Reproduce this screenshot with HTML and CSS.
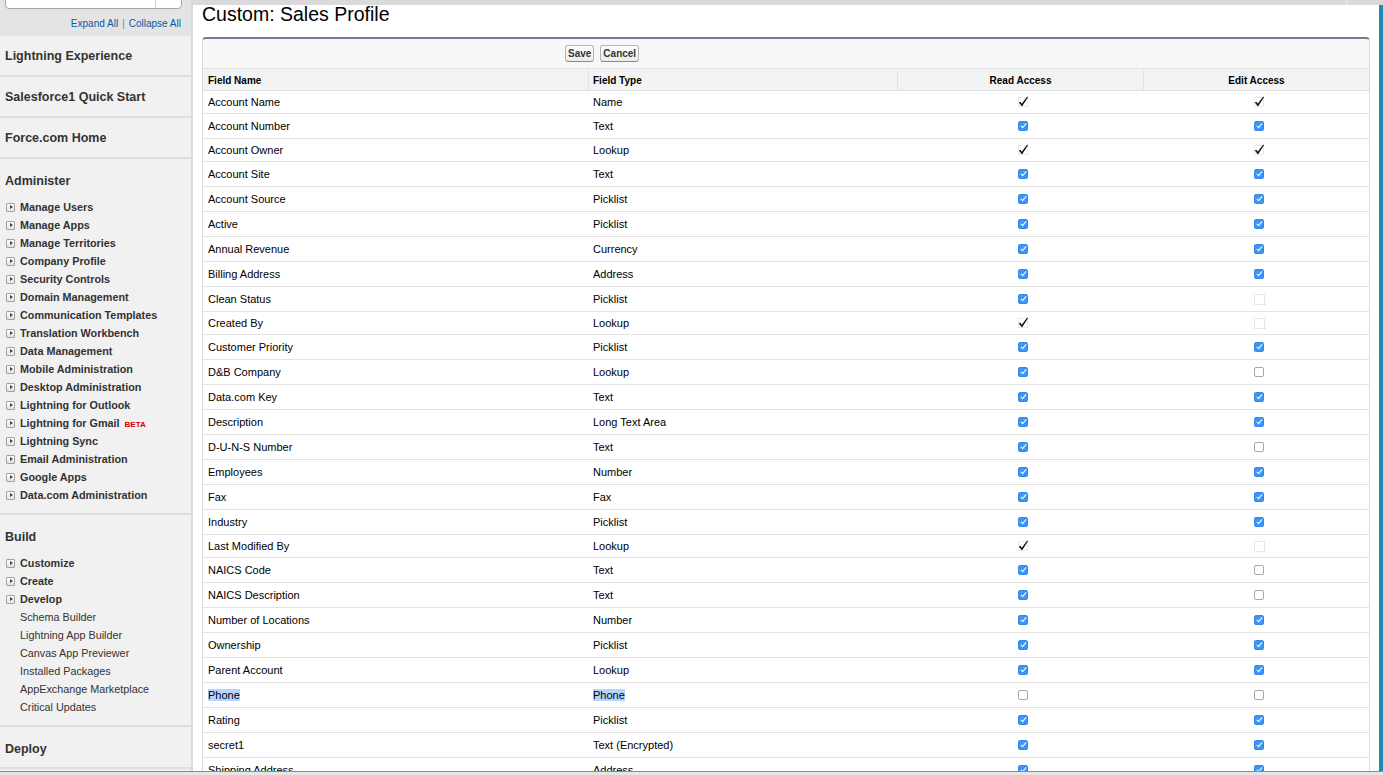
FILE: index.html
```html
<!DOCTYPE html>
<html lang="en">
<head>
<meta charset="utf-8">
<title>Custom: Sales Profile</title>
<link rel="stylesheet" href="styles.css">
</head>
<body>
<div class="app">
  <div class="frame">
    <aside class="sidebar">
      <div class="sb-top">
        <div class="search"><span class="search-btn"></span></div>
        <div class="expand"><a href="#">Expand All</a><span class="sep">|</span><a href="#">Collapse All</a></div>
      </div>
      <div class="sb-link">Lightning Experience</div>
      <div class="sb-link">Salesforce1 Quick Start</div>
      <div class="sb-link">Force.com Home</div>
      <div class="sb-sec">
        <div class="sb-head">Administer</div>
        <ul class="sb-list">
          <li><span class="tw"></span><span>Manage Users</span></li>
          <li><span class="tw"></span><span>Manage Apps</span></li>
          <li><span class="tw"></span><span>Manage Territories</span></li>
          <li><span class="tw"></span><span>Company Profile</span></li>
          <li><span class="tw"></span><span>Security Controls</span></li>
          <li><span class="tw"></span><span>Domain Management</span></li>
          <li><span class="tw"></span><span>Communication Templates</span></li>
          <li><span class="tw"></span><span>Translation Workbench</span></li>
          <li><span class="tw"></span><span>Data Management</span></li>
          <li><span class="tw"></span><span>Mobile Administration</span></li>
          <li><span class="tw"></span><span>Desktop Administration</span></li>
          <li><span class="tw"></span><span>Lightning for Outlook</span></li>
          <li><span class="tw"></span><span>Lightning for Gmail<b class="beta">BETA</b></span></li>
          <li><span class="tw"></span><span>Lightning Sync</span></li>
          <li><span class="tw"></span><span>Email Administration</span></li>
          <li><span class="tw"></span><span>Google Apps</span></li>
          <li><span class="tw"></span><span>Data.com Administration</span></li>
        </ul>
      </div>
      <div class="sb-sec">
        <div class="sb-head">Build</div>
        <ul class="sb-list">
          <li><span class="tw"></span><span>Customize</span></li>
          <li><span class="tw"></span><span>Create</span></li>
          <li><span class="tw"></span><span>Develop</span></li>
          <li class="plain">Schema Builder</li>
          <li class="plain">Lightning App Builder</li>
          <li class="plain">Canvas App Previewer</li>
          <li class="plain">Installed Packages</li>
          <li class="plain">AppExchange Marketplace</li>
          <li class="plain">Critical Updates</li>
        </ul>
      </div>
      <div class="sb-sec">
        <div class="sb-head">Deploy</div>
      </div>
    </aside>

    <div class="workspace">
      <div class="topstrip"><span class="ts-a"></span><span class="ts-b"></span></div>
      <div class="work-row">
        <main class="main">
          <h1>Custom: Sales Profile</h1>
          <section class="panel">
            <div class="btn-row"><button type="button">Save</button><button type="button">Cancel</button></div>
            <div class="grid">
              <div class="row head"><div class="c-name">Field Name</div><div class="c-type">Field Type</div><div class="c-acc">Read Access</div><div class="c-acc">Edit Access</div></div>

              <div class="row ro"><div class="c-name">Account Name</div><div class="c-type">Name</div><div class="c-acc"><svg class="ck" viewBox="0 0 12 12"><rect x="1.5" y="1.5" width="9" height="9" fill="none" stroke="#d6d6d6" stroke-dasharray="1 1"/><path d="M1.8 6.6 L3.4 5.7 L4.8 7.8 L10.2 0.6 L11 1.2 L5 10.6 Z" fill="#111"/></svg></div><div class="c-acc"><svg class="ck" viewBox="0 0 12 12"><rect x="1.5" y="1.5" width="9" height="9" fill="none" stroke="#d6d6d6" stroke-dasharray="1 1"/><path d="M1.8 6.6 L3.4 5.7 L4.8 7.8 L10.2 0.6 L11 1.2 L5 10.6 Z" fill="#111"/></svg></div></div>
              <div class="row"><div class="c-name">Account Number</div><div class="c-type">Text</div><div class="c-acc"><span class="cb on"></span></div><div class="c-acc"><span class="cb on"></span></div></div>
              <div class="row ro"><div class="c-name">Account Owner</div><div class="c-type">Lookup</div><div class="c-acc"><svg class="ck" viewBox="0 0 12 12"><rect x="1.5" y="1.5" width="9" height="9" fill="none" stroke="#d6d6d6" stroke-dasharray="1 1"/><path d="M1.8 6.6 L3.4 5.7 L4.8 7.8 L10.2 0.6 L11 1.2 L5 10.6 Z" fill="#111"/></svg></div><div class="c-acc"><svg class="ck" viewBox="0 0 12 12"><rect x="1.5" y="1.5" width="9" height="9" fill="none" stroke="#d6d6d6" stroke-dasharray="1 1"/><path d="M1.8 6.6 L3.4 5.7 L4.8 7.8 L10.2 0.6 L11 1.2 L5 10.6 Z" fill="#111"/></svg></div></div>
              <div class="row"><div class="c-name">Account Site</div><div class="c-type">Text</div><div class="c-acc"><span class="cb on"></span></div><div class="c-acc"><span class="cb on"></span></div></div>
              <div class="row"><div class="c-name">Account Source</div><div class="c-type">Picklist</div><div class="c-acc"><span class="cb on"></span></div><div class="c-acc"><span class="cb on"></span></div></div>
              <div class="row"><div class="c-name">Active</div><div class="c-type">Picklist</div><div class="c-acc"><span class="cb on"></span></div><div class="c-acc"><span class="cb on"></span></div></div>
              <div class="row"><div class="c-name">Annual Revenue</div><div class="c-type">Currency</div><div class="c-acc"><span class="cb on"></span></div><div class="c-acc"><span class="cb on"></span></div></div>
              <div class="row"><div class="c-name">Billing Address</div><div class="c-type">Address</div><div class="c-acc"><span class="cb on"></span></div><div class="c-acc"><span class="cb on"></span></div></div>
              <div class="row"><div class="c-name">Clean Status</div><div class="c-type">Picklist</div><div class="c-acc"><span class="cb on"></span></div><div class="c-acc"><span class="ck-off"></span></div></div>
              <div class="row ro"><div class="c-name">Created By</div><div class="c-type">Lookup</div><div class="c-acc"><svg class="ck" viewBox="0 0 12 12"><rect x="1.5" y="1.5" width="9" height="9" fill="none" stroke="#d6d6d6" stroke-dasharray="1 1"/><path d="M1.8 6.6 L3.4 5.7 L4.8 7.8 L10.2 0.6 L11 1.2 L5 10.6 Z" fill="#111"/></svg></div><div class="c-acc"><span class="ck-off"></span></div></div>
              <div class="row"><div class="c-name">Customer Priority</div><div class="c-type">Picklist</div><div class="c-acc"><span class="cb on"></span></div><div class="c-acc"><span class="cb on"></span></div></div>
              <div class="row"><div class="c-name">D&amp;B Company</div><div class="c-type">Lookup</div><div class="c-acc"><span class="cb on"></span></div><div class="c-acc"><span class="cb off"></span></div></div>
              <div class="row"><div class="c-name">Data.com Key</div><div class="c-type">Text</div><div class="c-acc"><span class="cb on"></span></div><div class="c-acc"><span class="cb on"></span></div></div>
              <div class="row"><div class="c-name">Description</div><div class="c-type">Long Text Area</div><div class="c-acc"><span class="cb on"></span></div><div class="c-acc"><span class="cb on"></span></div></div>
              <div class="row"><div class="c-name">D-U-N-S Number</div><div class="c-type">Text</div><div class="c-acc"><span class="cb on"></span></div><div class="c-acc"><span class="cb off"></span></div></div>
              <div class="row"><div class="c-name">Employees</div><div class="c-type">Number</div><div class="c-acc"><span class="cb on"></span></div><div class="c-acc"><span class="cb on"></span></div></div>
              <div class="row"><div class="c-name">Fax</div><div class="c-type">Fax</div><div class="c-acc"><span class="cb on"></span></div><div class="c-acc"><span class="cb on"></span></div></div>
              <div class="row"><div class="c-name">Industry</div><div class="c-type">Picklist</div><div class="c-acc"><span class="cb on"></span></div><div class="c-acc"><span class="cb on"></span></div></div>
              <div class="row ro"><div class="c-name">Last Modified By</div><div class="c-type">Lookup</div><div class="c-acc"><svg class="ck" viewBox="0 0 12 12"><rect x="1.5" y="1.5" width="9" height="9" fill="none" stroke="#d6d6d6" stroke-dasharray="1 1"/><path d="M1.8 6.6 L3.4 5.7 L4.8 7.8 L10.2 0.6 L11 1.2 L5 10.6 Z" fill="#111"/></svg></div><div class="c-acc"><span class="ck-off"></span></div></div>
              <div class="row"><div class="c-name">NAICS Code</div><div class="c-type">Text</div><div class="c-acc"><span class="cb on"></span></div><div class="c-acc"><span class="cb off"></span></div></div>
              <div class="row"><div class="c-name">NAICS Description</div><div class="c-type">Text</div><div class="c-acc"><span class="cb on"></span></div><div class="c-acc"><span class="cb off"></span></div></div>
              <div class="row"><div class="c-name">Number of Locations</div><div class="c-type">Number</div><div class="c-acc"><span class="cb on"></span></div><div class="c-acc"><span class="cb on"></span></div></div>
              <div class="row"><div class="c-name">Ownership</div><div class="c-type">Picklist</div><div class="c-acc"><span class="cb on"></span></div><div class="c-acc"><span class="cb on"></span></div></div>
              <div class="row"><div class="c-name">Parent Account</div><div class="c-type">Lookup</div><div class="c-acc"><span class="cb on"></span></div><div class="c-acc"><span class="cb on"></span></div></div>
              <div class="row"><div class="c-name"><span class="sel">Phone</span></div><div class="c-type"><span class="sel">Phone</span></div><div class="c-acc"><span class="cb off"></span></div><div class="c-acc"><span class="cb off"></span></div></div>
              <div class="row"><div class="c-name">Rating</div><div class="c-type">Picklist</div><div class="c-acc"><span class="cb on"></span></div><div class="c-acc"><span class="cb on"></span></div></div>
              <div class="row"><div class="c-name">secret1</div><div class="c-type">Text (Encrypted)</div><div class="c-acc"><span class="cb on"></span></div><div class="c-acc"><span class="cb on"></span></div></div>
              <div class="row"><div class="c-name">Shipping Address</div><div class="c-type">Address</div><div class="c-acc"><span class="cb on"></span></div><div class="c-acc"><span class="cb on"></span></div></div>
            </div>
          </section>
        </main>
        <div class="edgebar"></div>
      </div>
    </div>
  </div>
  <div class="bottombar"></div>
</div>
</body>
</html>
```

FILE: styles.css
```css
html, body {
  margin: 0;
  padding: 0;
  height: 775px;
  overflow: hidden;
}
body {
  font-family: "Liberation Sans", Arial, sans-serif;
  background: #fff;
  color: #000;
}
.app {
  display: flex;
  flex-direction: column;
  height: 775px;
}
.frame {
  display: flex;
  flex: 1;
  min-height: 0;
}

/* ---------- sidebar ---------- */
.sidebar {
  width: 191px;
  flex: none;
  background: #f1f1f1;
  border-right: 2px solid #dadada;
  color: #333;
  overflow: hidden;
}
.sb-top {
  height: 36px;
  background: #e4e4e4;
  overflow: hidden;
}
.search {
  height: 14px;
  margin: -5px 9px 0 5px;
  box-sizing: border-box;
  background: #fff;
  border: 1px solid #a5a5a5;
  border-radius: 0 0 4px 4px;
  display: flex;
  justify-content: flex-end;
}
.search-btn {
  width: 25px;
  border-left: 1px solid #cfcfcf;
}
.expand {
  margin-top: 9px;
  padding-right: 10px;
  text-align: right;
  font-size: 10px;
  line-height: 12px;
}
.expand a {
  color: #015ba7;
  text-decoration: none;
}
.expand .sep {
  color: #a56aa8;
  margin: 0 4px;
}
.sb-link {
  height: 41px;
  box-sizing: border-box;
  display: flex;
  align-items: center;
  padding-left: 5px;
  font-size: 12.5px;
  font-weight: bold;
  border-bottom: 2px solid #dedede;
}
.sb-sec {
  padding: 14px 0 9px 0;
  border-bottom: 2px solid #dedede;
}
.sb-head {
  padding-left: 5px;
  font-size: 12.5px;
  font-weight: bold;
  line-height: 17px;
}
.sb-list {
  list-style: none;
  margin: 8px 0 0 0;
  padding: 0;
}
.sb-list li {
  height: 18px;
  display: flex;
  align-items: center;
  gap: 5px;
  padding-left: 6px;
  font-size: 10.8px;
  font-weight: bold;
  white-space: nowrap;
}
.sb-list li.plain {
  padding-left: 20px;
  font-weight: normal;
}
.tw {
  width: 9px;
  height: 9px;
  box-sizing: border-box;
  border: 1px solid #a2a2a2;
  border-radius: 1px;
  background: linear-gradient(#ffffff, #e2e2e2);
  display: inline-flex;
  align-items: center;
  justify-content: center;
  flex: none;
}
.tw::after {
  content: "";
  width: 0;
  height: 0;
  border-left: 3px solid #444;
  border-top: 2.5px solid transparent;
  border-bottom: 2.5px solid transparent;
  margin-left: 1px;
}
.beta {
  color: #cc0000;
  font-size: 8px;
  font-weight: bold;
  margin-left: 5px;
}

/* ---------- workspace ---------- */
.workspace {
  flex: 1;
  min-width: 0;
  display: flex;
  flex-direction: column;
  overflow: hidden;
}
.topstrip {
  height: 5px;
  flex: none;
  display: flex;
  background: #dadada;
}
.ts-a {
  flex: 1;
  border-right: 1px solid #ebebeb;
}
.ts-b {
  width: 36px;
}
.work-row {
  flex: 1;
  min-height: 0;
  display: flex;
}
.main {
  flex: 1;
  min-width: 0;
  padding: 0 9px;
}
.edgebar {
  width: 4px;
  flex: none;
  background: #1a8cb3;
}
h1 {
  position: relative;
  margin: -2px 0 11px 0;
  font-size: 19.5px;
  line-height: 23px;
  font-weight: normal;
  color: #000;
}

/* ---------- panel ---------- */
.panel {
  border: 1px solid #dcdcdc;
  border-top: 2px solid #737b95;
  border-radius: 4px 4px 0 0;
  background: #f8f8f8;
}
.btn-row {
  height: 30px;
  box-sizing: border-box;
  border-bottom: 1px solid #e3e3e3;
  display: flex;
  align-items: center;
  gap: 6px;
  padding-left: 362px;
}
.btn-row button {
  height: 17px;
  padding: 0 2px;
  font-family: "Liberation Sans", Arial, sans-serif;
  font-size: 10px;
  font-weight: bold;
  color: #333;
  border: 1px solid #b5b5b5;
  border-bottom-color: #8a8a8a;
  border-radius: 3px;
  background: linear-gradient(#ffffff, #ebebeb);
}
.grid {
  background: #fff;
}
.row {
  display: grid;
  grid-template-columns: 385px 309px 246px 1fr;
  height: 25px;
  box-sizing: border-box;
  border-bottom: 1px solid #e3e3e3;
  align-items: center;
  font-size: 11px;
  color: #000;
}
.row.ro {
  height: 23px;
}
.row.head {
  height: 22px;
  background: #f2f3f3;
  border-bottom: 1px solid #e0e3e5;
  font-size: 10px;
  font-weight: bold;
  align-items: stretch;
  padding-top: 1px;
}
.row.head > div {
  display: flex;
  align-items: center;
}
.row.head > div + div {
  border-left: 1px solid #e0e3e5;
}
.row.head .c-type {
  padding-left: 4px;
}
.row.head .c-acc {
  padding-left: 0;
  justify-content: center;
}
.c-name, .c-type {
  padding-left: 5px;
  white-space: nowrap;
}
.c-acc {
  display: flex;
  justify-content: center;
  align-items: center;
  padding-left: 6px;
}
.sel {
  background: #b4d5fd;
}

/* ---------- checkboxes ---------- */
.cb {
  width: 10px;
  height: 10px;
  box-sizing: border-box;
  border-radius: 2px;
  display: inline-flex;
  align-items: center;
  justify-content: center;
}
.cb.on {
  background: #3e95f5;
  border: 1px solid #3688e6;
}
.cb.on::after {
  content: "";
  width: 2px;
  height: 5px;
  border: solid #fff;
  border-width: 0 1.5px 1.5px 0;
  transform: rotate(40deg);
  margin-top: -2px;
}
.cb.off {
  background: #fff;
  border: 1px solid #a8a8a8;
}
.ck {
  width: 12px;
  height: 12px;
  display: block;
}
.ck-off {
  width: 11px;
  height: 11px;
  box-sizing: border-box;
  border: 1px dotted #d2d2d2;
}

/* ---------- bottom ---------- */
.bottombar {
  height: 4px;
  flex: none;
  border-top: 1px solid #8c8c8c;
  box-sizing: border-box;
  background: #e6e6e6;
}
```
